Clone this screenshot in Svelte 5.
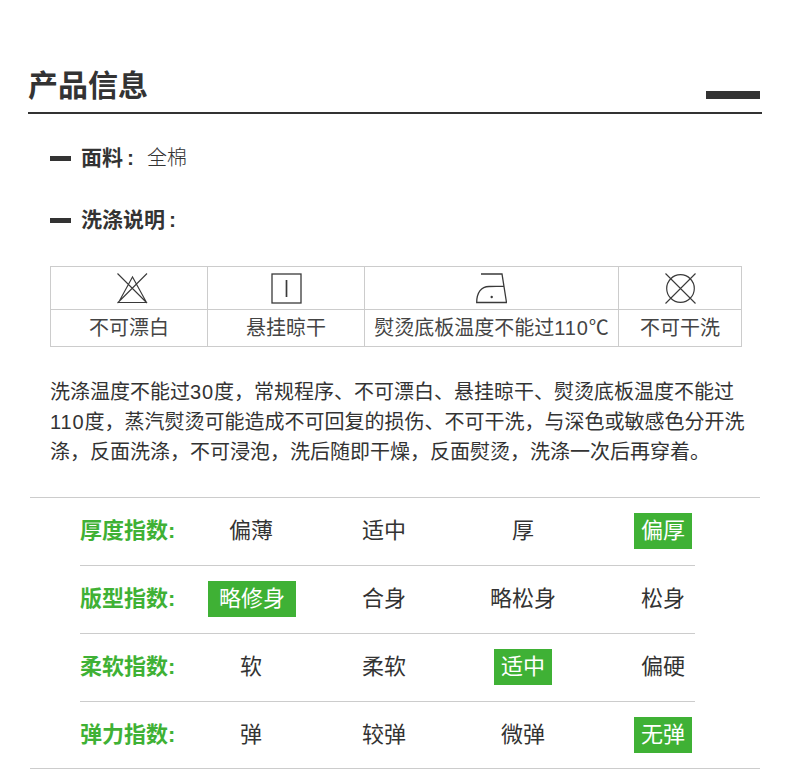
<script>
  const care = [
    { text: '不可漂白', icon: 'bleach' },
    { text: '悬挂晾干', icon: 'hang' },
    { text: '熨烫底板温度不能过', num: '110', unit: '℃', icon: 'iron' },
    { text: '不可干洗', icon: 'dry' }
  ];
  const rows = [
    { label: '厚度指数:', options: ['偏薄', '适中', '厚', '偏厚'], active: 3 },
    { label: '版型指数:', options: ['略修身', '合身', '略松身', '松身'], active: 0 },
    { label: '柔软指数:', options: ['软', '柔软', '适中', '偏硬'], active: 2 },
    { label: '弹力指数:', options: ['弹', '较弹', '微弹', '无弹'], active: 3 }
  ];
</script>

<main class="page">
  <header class="title">
    <h1>产品信息</h1>
    <span class="title-bar"></span>
  </header>

  <div class="spec first"><span class="dash"></span><b>面料<span class="colon">:</span></b><span class="value">全棉</span></div>
  <div class="spec second"><span class="dash"></span><b>洗涤说明<span class="colon">:</span></b></div>

  <div class="care">
    {#each care as item}
      <div class="icon-cell">
        <svg class={item.icon} width="31" height="31" viewBox="0 0 31 31" fill="none" stroke="#3a3a3a" stroke-width="1.1">
          {#if item.icon === 'bleach'}
            <path d="M1.5 29.5 15.5 4 29.5 29.5Z M.5 .5 30 30 M30 .5 .5 30" />
          {:else if item.icon === 'hang'}
            <rect x="1" y="1" width="29" height="29" stroke-width="1.3" />
            <path d="M15.5 7V24" stroke-width="1.7" />
          {:else if item.icon === 'iron'}
            <path d="M5 1H26L30.5 29.5H.7C.7 20 5 13.5 13 13.5L27.5 13.2" stroke-width="1.3" />
            <circle cx="15.7" cy="24" r="1.2" fill="#3a3a3a" stroke="none" />
          {:else}
            <circle cx="15.5" cy="15.5" r="13.8" stroke-width="1.2" />
            <path d="M.5 .5 30.5 30.5 M30.5 .5 .5 30.5" />
          {/if}
        </svg>
      </div>
    {/each}
    {#each care as item}
      <div class="text-cell"><span>{item.text}{#if item.num}<span class="num">{item.num}</span>{item.unit}{/if}</span></div>
    {/each}
  </div>

  <p class="notes">洗涤温度不能过<span class="num">30</span>度，常规程序、不可漂白、悬挂晾干、熨烫底板温度不能过<br /><span class="num">110</span>度，蒸汽熨烫可能造成不可回复的损伤、不可干洗，与深色或敏感色分开洗<br />涤，反面洗涤，不可浸泡，洗后随即干燥，反面熨烫，洗涤一次后再穿着。</p>

  <section class="indexes">
    {#each rows as row, r}
      <div class="index-row">
        <span class="index-label">{row.label}</span>
        {#each row.options as option, i}
          <span class="option"><span class:chip={i === row.active} class:wide={option.length > 2}>{option}</span></span>
        {/each}
      </div>
      {#if r < rows.length - 1}<div class="divider"></div>{/if}
    {/each}
  </section>
</main>

<style>
  :global(body) {
    margin: 0;
    background: #fff;
  }
  .page {
    width: 790px;
    height: 769px;
    overflow: hidden;
    color: #333;
    font-family: "Liberation Sans", "Noto Sans CJK SC", sans-serif;
  }
  .title {
    margin: 0 28px;
    height: 112px;
    border-bottom: 2px solid #333;
    display: flex;
    justify-content: space-between;
    align-items: flex-end;
  }
  h1 {
    margin: 0 0 4px;
    font-size: 30px;
    line-height: 44px;
    font-weight: 700;
  }
  .title-bar {
    width: 54px;
    height: 8px;
    margin: 0 2px 13px 0;
    background: #333;
  }
  .spec {
    margin-left: 50px;
    display: flex;
    align-items: center;
    font-size: 21px;
    line-height: 30px;
    height: 30px;
  }
  .spec.first { margin-top: 29px; }
  .spec.second { margin-top: 32px; }
  .spec b { font-weight: 700; }
  .colon { margin-left: 4px; }
  .dash {
    width: 21px;
    height: 5px;
    margin-right: 10px;
    background: #333;
  }
  .value { margin-left: 13px; font-size: 20px; font-weight: 300; }
  .num { letter-spacing: 0.9px; }
  .care {
    margin: 31px 0 0 50px;
    width: 692px;
    display: grid;
    grid-template-columns: 157px 157px 254px 123px;
    grid-template-rows: 43px 37px;
    border-top: 1px solid #ccc;
    border-left: 1px solid #ccc;
    box-sizing: border-box;
  }
  .icon-cell, .text-cell {
    border-right: 1px solid #ccc;
    border-bottom: 1px solid #ccc;
    display: flex;
    align-items: center;
    justify-content: center;
  }
  .bleach { transform: translateX(3px); }
  .text-cell {
    font-size: 20px;
    line-height: 30px;
    color: #444;
    white-space: nowrap;
    padding-bottom: 1px;
  }
  .notes {
    margin: 30px 0 0 50px;
    font-size: 20px;
    line-height: 30px;
    white-space: nowrap;
    font-weight: 400;
  }
  .indexes {
    margin: 30px 30px 0;
    height: 270px;
    border-top: 1px solid #ccc;
    border-bottom: 1px solid #ccc;
    padding-left: 50px;
  }
  .index-row {
    height: 67px;
    display: grid;
    grid-template-columns: 110px 122px 144px 134px 146px;
    align-items: center;
  }
  .index-label {
    color: #3fb135;
    font-size: 22px;
    line-height: 30px;
    font-weight: 700;
    white-space: nowrap;
    margin-top: -2px;
  }
  .option {
    text-align: center;
    font-size: 22px;
    line-height: 36px;
    margin-top: -2px;
  }
  .chip {
    display: inline-block;
    padding: 0 7px;
    background: #3fb135;
    color: #fff;
    height: 36px;
  }
  .chip.wide { padding: 0 11px; margin-left: 2px; }
  .divider {
    width: 615px;
    height: 1px;
    background: #ccc;
  }
</style>
